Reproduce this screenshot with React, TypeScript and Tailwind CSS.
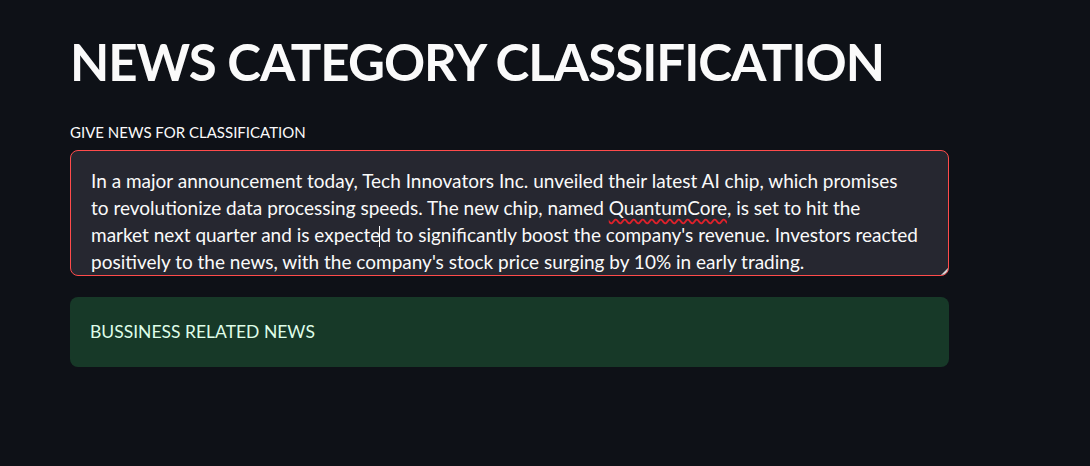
export default function App() {
  const lines = [
    "In a major announcement today, Tech Innovators Inc. unveiled their latest AI chip, which promises",
    "to revolutionize data processing speeds. The new chip, named ",
    "market next quarter and is expected to significantly boost the company's revenue. Investors reacted",
    "positively to the news, with the company's stock price surging by 10% in early trading.",
  ];

  return (
    <div
      className="min-h-[466px] w-full bg-[#0e1117] text-[#fafafa] pl-[70px] pt-[30px]"
      style={{ fontFamily: "Lato, 'Noto Sans', sans-serif" }}
    >
      <div className="w-[879px] flex flex-col">
        <h1 className="text-[51px] font-bold leading-[64px] tracking-[-1px]">
          NEWS CATEGORY CLASSIFICATION
        </h1>

        <label className="mt-[28px] text-[15px] leading-[20px]">GIVE NEWS FOR CLASSIFICATION</label>

        <div className="relative mt-[8px] h-[126px] overflow-hidden rounded-lg border border-[#ff4b4b] bg-[#262730] px-[20px] pt-[16px] text-[19px] leading-[27px]">
          <div className="whitespace-nowrap">{lines[0]}</div>
          <div className="whitespace-nowrap">
            {lines[1]}
            <span className="underline decoration-wavy decoration-[#e0202a] underline-offset-[3px]">QuantumCore</span>
            , is set to hit the
          </div>
          <div className="whitespace-nowrap">
            market next quarter and is expect
            <span className="relative">
              e
              <span className="absolute right-0 top-[3px] h-[21px] w-px bg-[#fafafa]" />
            </span>
            d to significantly boost the company's revenue. Investors reacted
          </div>
          <div className="whitespace-nowrap">{lines[3]}</div>
          <div className="absolute bottom-0 right-0 h-[7px] w-[7px] bg-[#d8d8d8] [clip-path:polygon(100%_0,100%_100%,0_100%)]" />
        </div>

        <div className="mt-[21px] flex h-[70px] items-center rounded-lg bg-[#173928] px-[20px] text-[17.5px] text-[#dffde9]">
          BUSSINESS RELATED NEWS
        </div>
      </div>
    </div>
  );
}
